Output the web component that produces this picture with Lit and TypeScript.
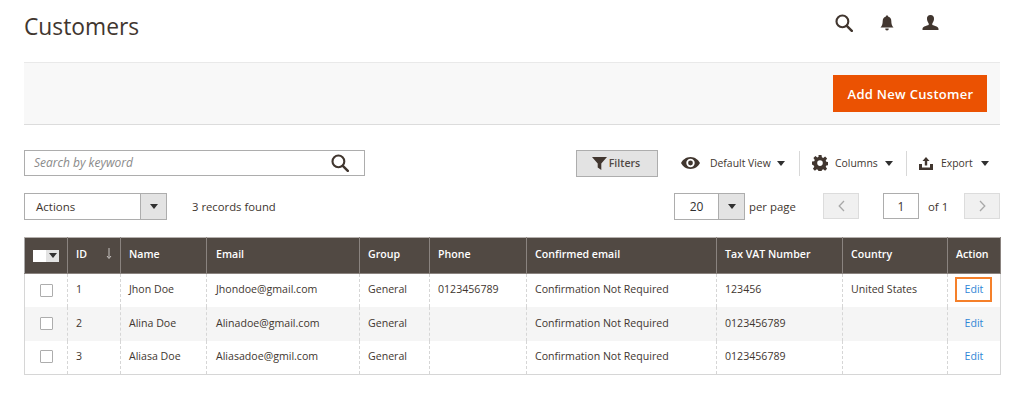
import { LitElement, html, css } from "lit";
import { customElement } from "lit/decorators.js";

const searchIcon = (s: number) => html`<svg class="ic" width=${s} height=${s} viewBox="0 0 18 18"><circle cx="7.4" cy="7.4" r="5.9" fill="none" stroke="#41362f" stroke-width="2.1"/><path d="M11.8 11.8l5 5" stroke="#41362f" stroke-width="2.5" stroke-linecap="round"/></svg>`;
const caret = html`<svg class="caret" width="8" height="5" viewBox="0 0 8 5"><path d="M0 0h8L4 5z" fill="#303030"/></svg>`;

const rows = [
  ["1", "Jhon Doe", "Jhondoe@gmail.com", "General", "0123456789", "Confirmation Not Required", "123456", "United States"],
  ["2", "Alina Doe", "Alinadoe@gmail.com", "General", "", "Confirmation Not Required", "0123456789", ""],
  ["3", "Aliasa Doe", "Aliasadoe@gmil.com", "General", "", "Confirmation Not Required", "0123456789", ""],
];
const widths = [43, 53, 86, 153, 70, 97, 190, 126, 105, 53];

@customElement("app-root")
export class AppRoot extends LitElement {
  static styles = css`
    :host { display: block; width: 1024px; height: 400px; overflow: hidden; background: #fff; font-family: "Open Sans", sans-serif; color: #41362f; font-size: 11px; }
    .page { padding: 0 24px; display: flex; flex-direction: column; }
    .top { height: 62px; display: flex; align-items: flex-start; justify-content: space-between; }
    h1 { margin: 12px 0 0; font-size: 22.8px; line-height: 30px; font-weight: 400; color: #41362f; }
    .top-icons { display: flex; align-items: center; gap: 26px; margin: 14px 61px 0 0; height: 18px; }
    .top-icons .user { margin-left: 2px; }
    .top-icons .find { margin-right: 1px; }
    .actionbar { height: 63px; box-sizing: border-box; background: #f8f8f8; border-top: 1px solid #e9e9e9; border-bottom: 1px solid #dcdcdc; display: flex; justify-content: flex-end; align-items: center; padding-right: 13px; }
    .primary { width: 154px; height: 37px; box-sizing: border-box; padding-left: 1px; background: #eb5202; color: #fff; font-size: 13px; font-weight: 600; letter-spacing: .3px; display: flex; align-items: center; justify-content: center; }
    .row1 { margin-top: 24px; height: 28px; display: flex; align-items: center; white-space: nowrap; }
    .search { flex: none; width: 341px; height: 26px; box-sizing: border-box; border: 1px solid #adadad; display: flex; align-items: center; justify-content: space-between; padding: 0 15px 2px 9px; font-style: italic; font-size: 12px; color: #8a8a8a; }
    .search .ic { margin-top: 2px; }
    .filters { flex: none; margin-left: 211px; width: 82px; height: 27px; box-sizing: border-box; padding-right: 2px; background: #e3e3e3; border: 1px solid #adadad; display: flex; align-items: center; justify-content: center; gap: 2px; font-weight: 600; font-size: 10.6px; color: #514943; }
    .tool { flex: none; box-sizing: border-box; display: flex; align-items: center; height: 25px; font-size: 10.4px; }
    .view { margin-left: 23px; width: 118px; gap: 10px; }
    .view .caret { margin-left: -4px; }
    .cols { border-left: 1px solid #d8d8d8; padding-left: 12px; width: 107px; gap: 7px; }
    .exp { border-left: 1px solid #d8d8d8; padding-left: 12px; width: 94px; gap: 8px; }
    .row2 { margin-top: 15px; height: 28px; display: flex; align-items: center; white-space: nowrap; }
    .row2 > * { flex: none; }
    .sel { height: 27px; box-sizing: border-box; border: 1px solid #adadad; display: flex; align-items: stretch; color: #303030; }
    .sel .val { display: flex; align-items: center; }
    .sel .btn { width: 25px; background: #e3e3e3; border-left: 1px solid #adadad; display: flex; align-items: center; justify-content: center; }
    .actions { width: 143px; }
    .actions .val { flex: 1; padding-left: 11px; font-size: 11.5px; color: #41362f; }
    .row2 > .found { flex: 1; margin-left: 25px; font-size: 11.3px; }
    .perpage { width: 71px; }
    .perpage .val { flex: 1; justify-content: center; font-size: 12px; }
    .perlabel { margin-left: 4px; width: 74px; font-size: 11.4px; }
    .pg { width: 36px; height: 26px; box-sizing: border-box; background: #f0f0f0; border: 1px solid #dcdcdc; display: flex; align-items: center; justify-content: center; }
    .num { margin-left: 24px; width: 36px; height: 26px; box-sizing: border-box; border: 1px solid #adadad; display: flex; align-items: center; justify-content: center; font-size: 12px; }
    .of { margin-left: 9px; width: 36px; font-size: 11.4px; }
    table { margin-top: 17px; width: 976px; table-layout: fixed; border-collapse: collapse; font-size: 10.6px; }
    th { height: 36px; box-sizing: border-box; background: #514943; color: #fff; font-weight: 600; text-align: left; padding: 0 8px 4px; border: 1px solid #8a837f; border-top-color: #b5b0ad; white-space: nowrap; }
    th:first-child, th:last-child { border-left-color: #aaa; }
    th:nth-child(4), td:nth-child(4) { padding-left: 9px; }
    td { height: 33.7px; box-sizing: border-box; padding: 0 8px 3px; border-left: 1px dashed #d6d6d6; border-right: 1px dashed #d6d6d6; white-space: nowrap; color: #41362f; }
    tr.alt td { background: #f5f5f5; }
    tbody tr:last-child td { border-bottom: 1px solid #d6d6d6; }
    td:first-child { border-left: 1px solid #d6d6d6; }
    td:last-child { border-right: 1px solid #d6d6d6; padding: 0 0 3px; text-align: center; }
    .thflex { display: flex; justify-content: space-between; align-items: center; }
    .mass { display: flex; width: 26px; height: 12px; margin-top: 3px; }
    .mass i { width: 13px; background: #fff; }
    .mass b { width: 13px; background: #e3e3e3; display: flex; align-items: center; justify-content: center; }
    th.chk { padding: 0 0 3px 8px; }
    .cb { display: block; width: 13px; height: 13px; box-sizing: border-box; border: 1px solid #adadad; background: #fff; margin-left: 7px; border-radius: 1px; }
    td.chk { padding: 0 0 1px 8px; }
    a { color: #2f86d6; text-decoration: none; display: inline-block; }
    .hl { position: relative; }
    .hl::after { content: ""; position: absolute; left: 7px; top: 3px; width: 37px; height: 25px; box-sizing: border-box; border: 2px solid #f5802a; }
    .ic { display: block; flex: none; }
  `;

  render() {
    return html`<div class="page">
      <div class="top">
        <h1>Customers</h1>
        <div class="top-icons">
          <span class="find">${searchIcon(18)}</span>
          <svg class="ic" width="14" height="16" viewBox="0 0 14 16"><path d="M7 0.5c.8 0 1.300.5 1.300 1.200 2 .5 3 2.200 3 4.300 0 3 .7 4.700 2.200 6.500H.5C2 10.700 2.700 9 2.700 6c0-2.100 1-3.800 3-4.300C5.700 1 6.200.5 7 .5z" fill="#41362f"/><path d="M5.300 13.500h3.400A1.700 1.700 0 0 1 7 15.500a1.700 1.700 0 0 1-1.700-2z" fill="#41362f"/></svg>
          <svg class="ic user" width="17" height="16" viewBox="0 0 17 16"><path d="M8.500 0C11 0 12.300 1.800 12 4.300c-.2 1.700-.9 3.200-1.700 4.200v1.500c2 .9 6 1.300 6.200 3.700V15H.5v-1.300C.7 11.300 4.700 10.900 6.700 10V8.500C5.900 7.500 5.200 6 5 4.300 4.700 1.800 6 0 8.500 0z" fill="#41362f"/></svg>
        </div>
      </div>
      <div class="actionbar"><div class="primary">Add New Customer</div></div>
      <div class="row1">
        <div class="search"><span>Search by keyword</span>${searchIcon(18)}</div>
        <div class="filters">
          <svg class="ic" width="15" height="13" viewBox="0 0 15 13"><path d="M0 0h15L9.300 6.500V13L5.700 10.500v-4z" fill="#41362f"/></svg>
          <span>Filters</span>
        </div>
        <div class="tool view">
          <svg class="ic" width="19" height="12" viewBox="0 0 19 12"><path fill-rule="evenodd" d="M9.500 0C14 0 17.500 3 19 6c-1.500 3-5 6-9.500 6S1.500 9 0 6c1.500-3 5-6 9.500-6zm0 1.800a4.200 4.200 0 1 0 0 8.400 4.200 4.200 0 0 0 0-8.400zm0 1.800a2.400 2.400 0 1 1 0 4.800 2.400 2.400 0 0 1 0-4.800z" fill="#41362f"/></svg>
          <span>Default View</span>${caret}
        </div>
        <div class="tool cols">
          <svg class="ic" width="16" height="16" viewBox="0 0 16 16"><path fill-rule="evenodd" d="M6.500 0h3l.4 2.300 1.300.6L13.100 1.500l2 2-1.400 1.900.6 1.300 2.200.4v3l-2.200.4-.6 1.300 1.400 1.900-2 2-1.900-1.400-1.300.6-.4 2.300h-3l-.4-2.300-1.300-.6-1.900 1.400-2-2 1.400-1.900-.6-1.300L0 9.600v-3l2.200-.4.6-1.300L1.400 3l2-2 1.900 1.400 1.300-.6zM8 5.300a2.800 2.800 0 1 0 0 5.600 2.800 2.800 0 0 0 0-5.600z" fill="#41362f"/></svg>
          <span>Columns</span>${caret}
        </div>
        <div class="tool exp">
          <svg class="ic" width="14" height="13" viewBox="0 0 14 13"><path d="M7 0l3.500 4H8.200v4.500H5.800V4H3.500z" fill="#41362f"/><path d="M0 7h3v3.500h8V7h3v6H0z" fill="#41362f"/></svg>
          <span>Export</span>${caret}
        </div>
      </div>
      <div class="row2">
        <div class="sel actions"><div class="val">Actions</div><div class="btn">${caret}</div></div>
        <div class="found">3 records found</div>
        <div class="sel perpage"><div class="val">20</div><div class="btn">${caret}</div></div>
        <div class="perlabel">per page</div>
        <div class="pg"><svg width="7" height="12" viewBox="0 0 7 12"><path d="M6 1L1.200 6 6 11" fill="none" stroke="#a8a8a8" stroke-width="1.300"/></svg></div>
        <div class="num">1</div>
        <div class="of">of 1</div>
        <div class="pg"><svg width="7" height="12" viewBox="0 0 7 12"><path d="M1 1l4.800 5L1 11" fill="none" stroke="#a8a8a8" stroke-width="1.300"/></svg></div>
      </div>
      <table>
        <colgroup>${widths.map((w) => html`<col style="width:${w}px" />`)}</colgroup>
        <thead><tr>
          <th class="chk"><div class="mass"><i></i><b>${caret}</b></div></th>
          <th><div class="thflex"><span>ID</span><svg width="6" height="11" viewBox="0 0 6 11"><path d="M3 0v9.500M1 8l2 2.500L5 8" fill="none" stroke="#c8c4c1" stroke-width="1"/></svg></div></th>
          ${["Name", "Email", "Group", "Phone", "Confirmed email", "Tax VAT Number", "Country", "Action"].map((t) => html`<th>${t}</th>`)}
        </tr></thead>
        <tbody>
          ${rows.map((r, i) => html`<tr class=${i === 1 ? "alt" : ""}>
            <td class="chk"><span class="cb"></span></td>
            ${r.map((c) => html`<td>${c}</td>`)}
            <td class=${i === 0 ? "hl" : ""}><a>Edit</a></td>
          </tr>`)}
        </tbody>
      </table>
    </div>`;
  }
}
